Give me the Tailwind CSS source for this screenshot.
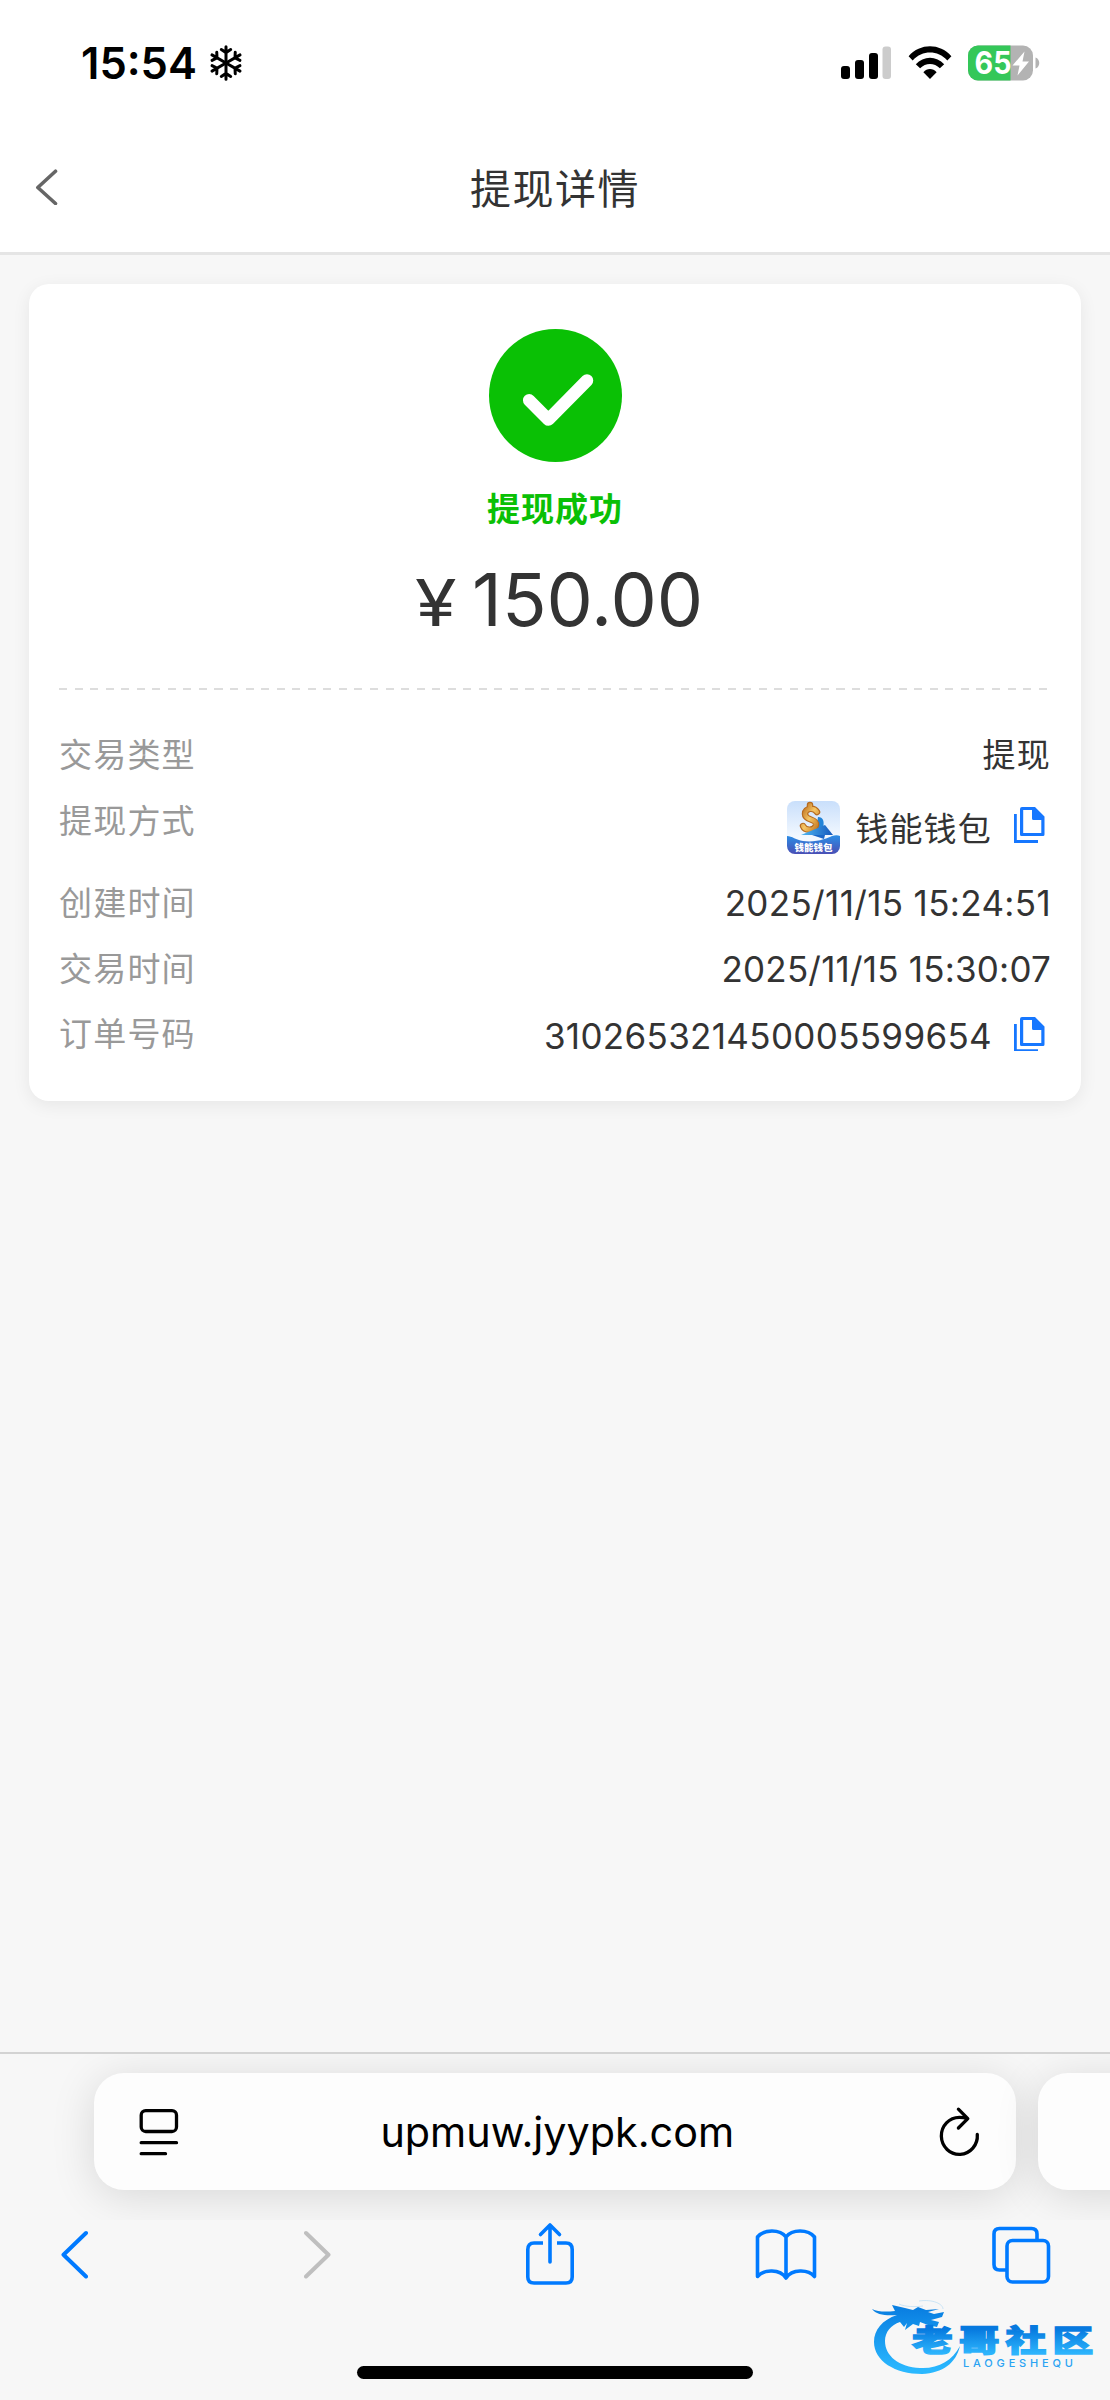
<!DOCTYPE html>
<html lang="zh-CN">
<head>
  <meta charset="UTF-8" />
  <meta name="viewport" content="width=device-width, initial-scale=1.0"/>
  <title>提现详情</title>
  <script src="https://cdn.jsdelivr.net/npm/@tailwindcss/browser@4"></script>
</head>
<body class="bg-[#f7f7f7] font-['Inter','Noto_Sans_CJK_SC',sans-serif] text-[#333]">
  <div class="flex flex-col w-[1110px] h-[2400px] overflow-hidden">

    <!-- Status bar -->
    <div class="flex items-center justify-between h-[125px] shrink-0 bg-white pl-[81px] pr-[70px]">
      <div class="flex items-center gap-[11px] text-black">
        <span class="text-[43.500px] leading-[50px] font-semibold w-[117px] whitespace-nowrap">15:54</span>
        <svg class="w-[34px] h-[38px]" viewBox="-17 -19 34 38" fill="none" stroke="currentColor" stroke-width="3" stroke-linecap="round">
          <g id="arm"><path d="M0 0V-16.2M-4.700 -13.4L0 -10.400L4.700 -13.4"/></g>
          <use href="#arm" transform="rotate(60)"/>
          <use href="#arm" transform="rotate(120)"/>
          <use href="#arm" transform="rotate(180)"/>
          <use href="#arm" transform="rotate(240)"/>
          <use href="#arm" transform="rotate(300)"/>
        </svg>
      </div>
      <div class="flex items-center">
        <svg class="w-[51px] h-[34px] mr-4" viewBox="0 0 51 34">
          <rect x="0" y="20" width="9" height="13" rx="3"/>
          <rect x="14" y="14" width="9" height="19" rx="3"/>
          <rect x="28" y="7" width="9" height="26" rx="3"/>
          <rect x="41.500" y="0.500" width="8.500" height="32.500" rx="3" fill="#ccc"/>
        </svg>
        <svg class="w-[44px] h-[34px] mr-4" viewBox="0 0 44 34">
          <path d="M0.600 10.200C12.300 -3 31.700 -3 43.400 10.200L39.300 14.400C29.700 4 14.300 4 4.700 14.400Z"/>
          <path d="M7.800 18.200C15.500 9.500 28.500 9.500 36.200 18.200L31.900 22.300C26.300 16.400 17.700 16.400 12.100 22.300Z"/>
          <path d="M15.400 26.200C19 22 25 22 28.600 26.200L22 33Z"/>
        </svg>
        <svg class="w-[72px] h-[36px]" viewBox="0 0 72 36">
          <defs><clipPath id="bat"><rect x="0" y="0.500" width="65" height="35" rx="10"/></clipPath></defs>
          <g clip-path="url(#bat)">
            <path fill="#b3b3b3" d="M0 0h65v36H0z"/>
            <path fill="#34c759" d="M0 0h42.500v36H0z"/>
          </g>
          <path fill="#b3b3b3" d="M67.500 12.500c5 1.500 5 9.500 0 11z"/>
          <text x="6.500" y="29.300" textLength="37" lengthAdjust="spacingAndGlyphs" fill="#fff" class="font-bold text-[31px]">65</text>
          <path fill="#fff" d="M56.500 6.500L44.500 20.500H51.500L49.500 30.500L61 16.500H54.500Z"/>
        </svg>
      </div>
    </div>

    <!-- Page header -->
    <div class="grid grid-cols-3 items-center h-[130px] shrink-0 bg-white border-b-3 border-[#e5e5e5] px-[35px]">
      <svg class="w-6 h-9 mb-1" viewBox="0 0 24 36" fill="none" stroke="#666" stroke-width="3.600" stroke-linecap="round" stroke-linejoin="round">
        <path d="M20.500 2.200L2.800 18.500L20.500 34.500"/>
      </svg>
      <h1 class="text-center text-[41px] tracking-[1.500px] leading-none whitespace-nowrap pt-[2px]">提现详情</h1>
    </div>

    <!-- Detail card -->
    <div class="mt-[29px] mx-[29px] h-[816.500px] shrink-0 bg-white rounded-[20px] shadow-[0_4px_18px_rgba(0,0,0,0.070)] px-[30px]">
      <div class="flex flex-col items-center pt-[45px] h-[404px]">
        <svg class="w-[133px] h-[133px] shrink-0" viewBox="0 0 133 133" fill="none">
          <circle cx="66.500" cy="66.500" r="66.500" fill="#0ac005"/>
          <path d="M40.200 71.300L59.400 90.600L98 51.500" stroke="#fff" stroke-width="12.500" stroke-linecap="round" stroke-linejoin="round"/>
        </svg>
        <div class="mt-[23px] h-12 text-[33px] leading-[48px] font-bold tracking-[1px] text-[#0ac005]">提现成功</div>
        <div class="mt-[22px] flex items-baseline h-[90px] leading-[90px] pl-[5px]">
          <span class="text-[64px] w-[57px]"><span class="inline-block origin-left scale-x-[1.180]">¥</span></span>
          <span class="text-[73.500px] w-[228px] whitespace-nowrap">150.00</span>
        </div>
      </div>
      <div class="h-[2px] bg-[repeating-linear-gradient(90deg,#ddd_0_8px,transparent_8px_15.550px)]"></div>

      <div class="pt-[33px] text-[33px] tracking-[1.200px]">
        <div class="flex justify-between h-[65px] leading-[65px]">
          <span class="text-[#999]">交易类型</span>
          <span>提现</span>
        </div>
        <div class="flex justify-between h-[83px]">
          <span class="text-[#999] leading-[66px]">提现方式</span>
          <div class="flex items-center">
            <svg class="w-[53px] h-[53px] mr-[15px] mb-[4px]" viewBox="0 0 53 53">
              <defs>
                <linearGradient id="sky" x1="0" y1="0" x2="0" y2="1"><stop stop-color="#c9dffb"/><stop offset="0.700" stop-color="#f4f9ff"/></linearGradient>
                <linearGradient id="sea" x1="0" y1="0" x2="0" y2="1"><stop stop-color="#2b8ee6"/><stop offset="1" stop-color="#4a4fb5"/></linearGradient>
                <linearGradient id="gold" x1="0" y1="0" x2="1" y2="1"><stop stop-color="#b96a1c"/><stop offset="0.500" stop-color="#f6c766"/><stop offset="1" stop-color="#c77a21"/></linearGradient>
                <linearGradient id="sail" x1="0" y1="0" x2="1" y2="0"><stop stop-color="#4fb8f2"/><stop offset="1" stop-color="#1559bd"/></linearGradient>
                <clipPath id="app"><rect width="53" height="53" rx="8"/></clipPath>
              </defs>
              <g clip-path="url(#app)">
                <path fill="url(#sky)" d="M0 0h53v53H0z"/>
                <path fill="#2384d8" d="M31 16C37 16 38 22 35 30H29Z"/>
                <path d="M30 11C27 6 18 7 18 13C18 20 30 17 29 24C28 30 18 30 16 25M23 7V4" fill="none" stroke="#b66b20" stroke-width="6.500" stroke-linecap="round"/>
                <path d="M30 11C27 6 18 7 18 13C18 20 30 17 29 24C28 30 18 30 16 25M23 7V4" fill="none" stroke="url(#gold)" stroke-width="4.200" stroke-linecap="round"/>
                <path fill="url(#sail)" d="M14 34L38 24L46 34Z"/>
                <path fill="#1b67c8" d="M25 34L38 34L37 38Z"/>
                <path fill="url(#sea)" d="M0 35C5 35 9 39 16 40C29 42 41 37 45 35C48 34 51 34 53 35V53H0Z"/>
                <text x="7.500" y="50.300" textLength="38" lengthAdjust="spacingAndGlyphs" fill="#fff" class="text-[9px] font-black tracking-normal">钱能钱包</text>
              </g>
            </svg>
            <span class="mr-[22px]">钱能钱包</span>
            <svg class="w-[31px] h-[36px] mr-[6px] mb-[9px]" viewBox="0 0 31 36" fill="#1677ff" fill-rule="evenodd">
              <path d="M0 7H2.800V33H24V36H0Z"/>
              <path d="M8 0H21L30.500 9.500V27.500Q30.500 29 29 29H7.500Q6 29 6 27.500V2Q6 0 8 0ZM9.200 3V26H27.300V13H19.500Q18 13 18 11.500V3Z"/>
            </svg>
          </div>
        </div>
        <div class="flex justify-between h-[65.500px] leading-[65px]">
          <span class="text-[#999]">创建时间</span>
          <span class="text-[35px] tracking-[0.350px]">2025/11/15 15:24:51</span>
        </div>
        <div class="flex justify-between h-[65.500px] leading-[65px]">
          <span class="text-[#999]">交易时间</span>
          <span class="text-[35px] tracking-[0.200px]">2025/11/15 15:30:07</span>
        </div>
        <div class="flex justify-between h-[66px] leading-[65px]">
          <span class="text-[#999]">订单号码</span>
          <div class="flex items-center">
            <span class="text-[35px] tracking-[0.330px] mr-[22px] pt-[2px]">310265321450005599654</span>
            <svg class="w-[31px] h-[34px] mr-[6px] mb-[2px]" viewBox="0 0 31 34" fill="#1677ff" fill-rule="evenodd">
              <path d="M0 7H2.800V32.300H24V34H0Z"/>
              <path d="M8 0H21L30.500 9.500V27.500Q30.500 29 29 29H7.500Q6 29 6 27.500V2Q6 0 8 0ZM9.200 3V26H27.300V13H19.500Q18 13 18 11.500V3Z"/>
            </svg>
          </div>
        </div>
      </div>
    </div>

    <!-- Browser bar -->
    <div class="relative mt-auto h-[348px] shrink-0 border-t-2 border-[#d3d3d3] bg-[#f7f7f7]">
      <div class="flex gap-[21.500px] pt-[19px] pl-[93.500px] overflow-hidden h-[166px]">
        <div class="flex items-center justify-between w-[922.500px] h-[117px] shrink-0 rounded-[30px] bg-[#fdfdfd] shadow-[0_6px_44px_rgba(0,0,0,0.130)] pl-[45px] pr-[36px] text-black">
          <svg class="w-10 h-12" viewBox="0 0 40 48" fill="none" stroke="currentColor" stroke-width="3.300" stroke-linecap="round">
            <rect x="2.200" y="2.700" width="35.300" height="20.800" rx="4.500"/>
            <path d="M2.200 34.700H37.500M2.200 45.700H26.500"/>
          </svg>
          <span class="text-[41.300px] leading-none w-[356px] pt-[3px] text-center whitespace-nowrap">upmuw.jyypk.com</span>
          <svg class="w-11 h-[52px]" viewBox="0 0 44 52" fill="none" stroke="currentColor" stroke-width="3.300" stroke-linecap="round" stroke-linejoin="round">
            <path d="M41.300 28.500A18 18.500 0 1 1 23.400 11.400C26.500 11.400 29 11.800 31.300 12.600M22.400 3.200L31.800 12.700L22.400 22"/>
          </svg>
        </div>
        <div class="w-[200px] h-[117px] shrink-0 rounded-[30px] bg-[#fdfdfd] shadow-[0_6px_44px_rgba(0,0,0,0.130)]"></div>
      </div>

      <div class="flex items-center h-[70px] pl-[60px] text-[#007aff]">
        <svg class="w-7 h-[50px] mr-[216px]" viewBox="0 0 28 50" fill="none" stroke="currentColor" stroke-width="4" stroke-linecap="round" stroke-linejoin="round"><path d="M26 3L3.500 24.700L26 46.500"/></svg>
        <svg class="w-7 h-[50px] mr-[193px]" viewBox="0 0 28 50" fill="none" stroke="#bfbfbf" stroke-width="4" stroke-linecap="round" stroke-linejoin="round"><path d="M2 3L24.500 24.700L2 46.500"/></svg>
        <svg class="w-[50px] h-[64px] mr-[180px] mb-[4px]" viewBox="0 0 50 64" fill="none" stroke="currentColor" stroke-width="3.600" stroke-linejoin="round">
          <path d="M18 22H9Q2.800 22 2.800 28.500V56Q2.800 62 9 62H41Q47.200 62 47.200 56V28.500Q47.200 22 41 22H32"/>
          <path d="M25 41V5M15.500 13.500L25 4L34.500 13.500" stroke-linecap="round"/>
        </svg>
        <svg class="w-[62px] h-[52px] mr-[174px] mb-[2px]" viewBox="0 0 62 52" fill="none" stroke="currentColor" stroke-width="3.600" stroke-linejoin="round">
          <path d="M31 9C25 1 9 1 2.500 9V48.500C9 41 25 41 31 50C37 41 53 41 59.500 48.500V9C53 1 37 1 31 9ZM31 9V50"/>
        </svg>
        <svg class="w-[60px] h-[58px]" viewBox="0 0 60 58" fill="none" stroke="currentColor" stroke-width="3.600">
          <path d="M46 13V8Q46 2.500 40.500 2.500H8.500Q3 2.500 3 8V38.500Q3 44 8.500 44H16"/>
          <rect x="16" y="14.500" width="41.500" height="41.500" rx="5.500"/>
        </svg>
      </div>

      <!-- Home indicator -->
      <div class="mx-auto mt-[76px] w-[396px] h-[13px] rounded-full bg-black"></div>

      <!-- Community watermark -->
      <svg class="absolute left-[868px] top-[242px] w-[230px] h-[84px]" viewBox="0 0 230 84">
        <defs>
          <linearGradient id="wm" gradientUnits="userSpaceOnUse" x1="0" y1="14" x2="0" y2="74"><stop stop-color="#0a80e2"/><stop offset="1" stop-color="#2ab8ff"/></linearGradient>
          <linearGradient id="wt" x1="0" y1="0" x2="0" y2="1"><stop offset="0.200" stop-color="#0679df"/><stop offset="0.850" stop-color="#2cb4fc"/></linearGradient>
        </defs>
        <path fill="url(#wm)" d="M29 19C14 24 6 34 6 46C6 65 27 78 54 78C75 77 88 67 92 50C84 65 70 73 52 72C31 71 17 60 17 45C17 36 23 29 32 26L36 31L39 27L37 34L45 28L51 30L52 26L60 29L69 31L71 26L63 24L74 21L76 16L66 18L60 16L71 13L58 14L50 11L45 14L37 12L24 9L27 15C18 16 10 16 4 13C8 19 19 20 29 19Z"/>
        <path fill="none" stroke="#b8dcf4" stroke-width="1" stroke-opacity="0.700" d="M31 8C37 11 48 11 55 10M51 5C65 3 75 8 75 13"/>
        <text transform="translate(44 55) scale(1.200 .880)" textLength="151" fill="url(#wt)" stroke="url(#wt)" stroke-width="1.500" class="text-[34px] font-black">老哥社区</text>
        <text x="95" y="70.500" textLength="110" fill="#2aa3f3" class="text-[11px] font-medium">LAOGESHEQU</text>
      </svg>
    </div>
  </div>
</body>
</html>
